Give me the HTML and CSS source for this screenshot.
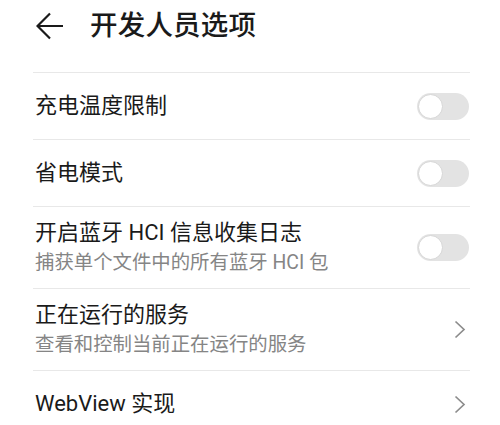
FILE: index.html
```html
<!DOCTYPE html>
<html lang="zh-CN">
<head>
    <meta charset="UTF-8">
    <meta name="viewport" content="width=device-width, initial-scale=1.0">
    <title>开发人员选项</title>
    <link rel="stylesheet" href="styles.css">
</head>
<body>
    <div class="header">
        <svg class="back" width="28" height="28" viewBox="0 0 28 28">
            <path d="M27 14H2M14 1.5L1.5 14L14 26.5" fill="none" stroke="#1a1a1a" stroke-width="2.2"/>
        </svg>
        <h1 class="title">开发人员选项</h1>
    </div>
    <div class="list">
        <div class="row">
            <div class="text">
                <div class="label">充电温度限制</div>
            </div>
            <span class="switch"><span class="knob"></span></span>
        </div>
        <div class="row">
            <div class="text">
                <div class="label">省电模式</div>
            </div>
            <span class="switch"><span class="knob"></span></span>
        </div>
        <div class="row tall">
            <div class="text">
                <div class="label">开启蓝牙 HCI 信息收集日志</div>
                <div class="sub">捕获单个文件中的所有蓝牙 HCI 包</div>
            </div>
            <span class="switch"><span class="knob"></span></span>
        </div>
        <div class="row tall">
            <div class="text">
                <div class="label">正在运行的服务</div>
                <div class="sub">查看和控制当前正在运行的服务</div>
            </div>
            <svg class="chevron" width="12" height="19" viewBox="0 0 12 19">
                <path d="M1.5 1.5L10 9.5L1.5 17.5" fill="none" stroke="#8c8c8c" stroke-width="1.7"/>
            </svg>
        </div>
        <div class="row">
            <div class="text">
                <div class="label">WebView 实现</div>
            </div>
            <svg class="chevron" width="12" height="19" viewBox="0 0 12 19">
                <path d="M1.5 1.5L10 9.5L1.5 17.5" fill="none" stroke="#8c8c8c" stroke-width="1.7"/>
            </svg>
        </div>
    </div>
</body>
</html>
```
FILE: styles.css
```css
body {
    margin: 0;
    background: #fff;
    font-family: Roboto, "Noto Sans CJK SC", sans-serif;
    color: #1a1a1a;
    overflow: hidden;
}
.header {
    display: flex;
    align-items: center;
    height: 52px;
    padding: 0 0 20px 36px;
}
.back {
    display: block;
    margin-right: 26px;
}
.title {
    margin: 0;
    font-size: 27.5px;
    font-weight: 500;
    line-height: 36px;
    letter-spacing: 0.2px;
}
.list {
    margin: 0 30px 0 33px;
}
.row {
    display: flex;
    align-items: center;
    justify-content: space-between;
    height: 66px;
    border-top: 1px solid #e8e8e8;
    padding-left: 2px;
}
.row.tall {
    height: 81px;
}
.label {
    font-size: 22px;
    line-height: 30px;
}
.sub {
    font-size: 19.4px;
    line-height: 30px;
    color: #858585;
}
.switch {
    position: relative;
    width: 52px;
    height: 27px;
    border-radius: 14px;
    background: #e3e3e3;
    margin-right: 1px;
}
.knob {
    position: absolute;
    left: 1px;
    top: 1px;
    width: 23px;
    height: 23px;
    border-radius: 50%;
    background: #fff;
    border: 1px solid #d6d6d6;
}
.chevron {
    display: block;
    margin-right: 4px;
}
```
